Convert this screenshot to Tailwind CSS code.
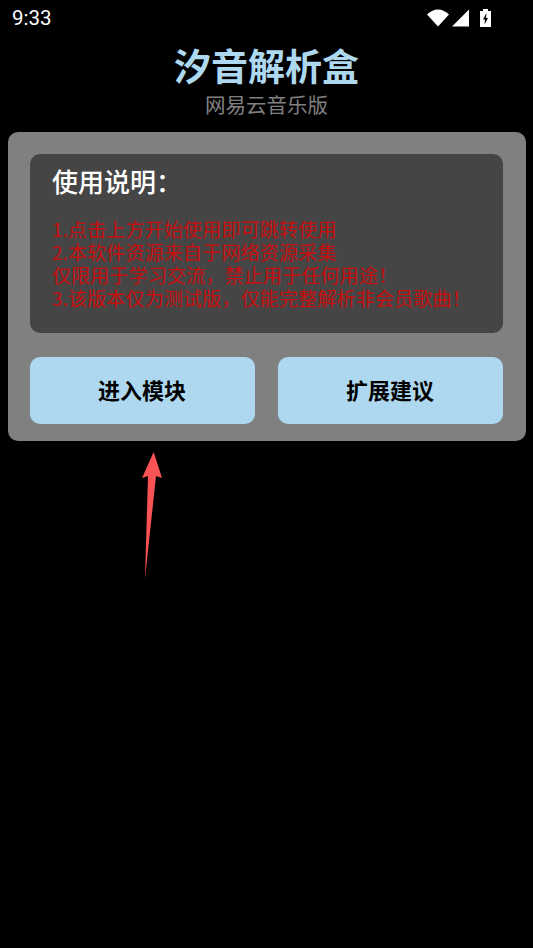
<!DOCTYPE html>
<html lang="zh">
<head>
    <meta charset="UTF-8">
    <meta name="viewport" content="width=device-width, initial-scale=1.0">
    <title>汐音解析盒</title>
    <script src="https://cdn.jsdelivr.net/npm/@tailwindcss/browser@4"></script>
</head>
<body class="relative w-[533px] h-[948px] overflow-hidden bg-black font-['Noto_Sans_CJK_SC','Noto_Sans',sans-serif]">
    <!-- 状态栏 -->
    <div class="flex items-center justify-between h-9 pl-[12px] pr-[42px]">
        <span class="font-['Roboto',sans-serif] text-[20.5px] text-white">9:33</span>
        <div class="flex items-center">
            <svg width="22" height="18" viewBox="0 0 22 18"><path d="M0 5.500C3 2.500 7 .5 11 .5s8 2 11 5L11 17.500z" fill="#fff"/></svg>
            <svg class="ml-[3px]" width="17" height="18" viewBox="0 0 17 18"><path d="M0 17.500 17 .5v17z" fill="#fff"/></svg>
            <svg class="ml-[11px]" width="11" height="18" viewBox="0 0 11 18"><path fill-rule="evenodd" d="M3 0h5v2h3v16H0V2h3zM6.500 4 3 10.500h2L4.500 15.500 8 9H6z" fill="#fff"/></svg>
        </div>
    </div>

    <!-- 标题 -->
    <div class="flex flex-col items-center">
        <h1 class="mt-[1px] h-[56px] text-[37px] leading-[56px] font-bold text-[#add8ef]">汐音解析盒</h1>
        <p class="-mt-[4px] h-[30px] text-[20.5px] leading-[30px] text-[#808080]">网易云音乐版</p>
    </div>

    <!-- 主卡片 -->
    <div class="ml-[7.5px] mt-[13px] w-[518px] h-[309px] rounded-[10px] bg-[#808080] pl-[22px] pr-[23px] pt-[22px]">
        <div class="h-[179px] rounded-[10px] bg-[#454545] pl-[22.5px] pr-4 pt-[8px]">
            <h2 class="text-[26px] leading-[38px] font-medium text-white">使用说明&#xFF1A;</h2>
            <div class="mt-[18px] text-[19.2px] leading-[23px] text-[#c50f0f]">
                <p>1.点击上方开始使用即可跳转使用</p>
                <p>2.本软件资源来自于网络资源采集</p>
                <p>仅限用于学习交流&#xFF0C;禁止用于任何用途&#xFF01;</p>
                <p>3.该版本仅为测试版&#xFF0C;仅能完整解析非会员歌曲&#xFF01;</p>
            </div>
        </div>
        <div class="mt-6 flex gap-[23px]">
            <button class="flex-1 h-[67px] pb-[3px] rounded-[10px] bg-[#add8ef] text-[22px] font-bold text-black">进入模块</button>
            <button class="flex-1 h-[67px] pb-[3px] rounded-[10px] bg-[#add8ef] text-[22px] font-bold text-black">扩展建议</button>
        </div>
    </div>

    <!-- 箭头标注 -->
    <svg class="absolute left-[140px] top-[450px]" width="26" height="132" viewBox="0 0 26 132">
        <path d="M13.700 2 22 28 16 26 5 129 8 26 2 28z" fill="#f95353"/>
    </svg>
</body>
</html>
